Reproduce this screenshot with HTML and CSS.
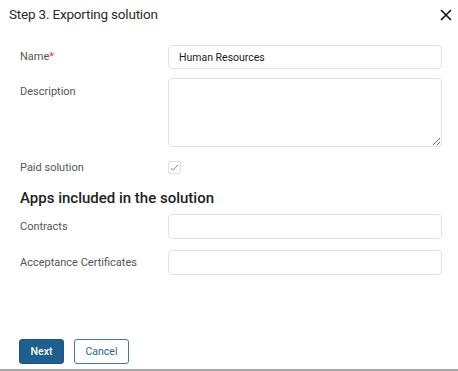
FILE: index.html
```html
<!DOCTYPE html>
<html lang="en">
<head>
<meta charset="UTF-8" />
<meta name="viewport" content="width=device-width, initial-scale=1.0"/>
<title>Step 3. Exporting solution</title>
<link rel="stylesheet" href="styles.css">
</head>
<body>
<div class="dialog">
<div class="header">
    <div class="title">Step 3. Exporting solution</div>
    <button class="close" aria-label="Close">
        <svg width="12" height="12" viewBox="0 0 12 12">
            <path d="M1 1 L11 11 M11 1 L1 11" stroke="#111" stroke-width="1.6" fill="none"/>
        </svg>
    </button>
</div>

<div class="form">
    <div class="row row-name">
        <label class="label">Name<span class="req">*</span></label>
        <input class="input" type="text" value="Human Resources">
    </div>
    <div class="row row-desc">
        <label class="label">Description</label>
        <textarea class="textarea"></textarea>
    </div>
    <div class="row row-paid">
        <label class="label">Paid solution</label>
        <span class="checkbox">
            <svg width="9" height="7" viewBox="0 0 9 7">
                <path d="M1 4 L3.3 6 L8 1" stroke="#5b6fc0" stroke-width="0.9" fill="none"/>
            </svg>
        </span>
    </div>

    <h2 class="section">Apps included in the solution</h2>

    <div class="row row-app">
        <label class="label">Contracts</label>
        <input class="input" type="text">
    </div>
    <div class="row row-app second">
        <label class="label">Acceptance Certificates</label>
        <input class="input" type="text">
    </div>
</div>

<div class="footer">
    <button class="btn btn-primary">Next</button>
    <button class="btn btn-default">Cancel</button>
</div>
<div class="bottom-line"></div>
</div>
</body>
</html>
```

FILE: styles.css
```css
body {
    margin: 0;
    font-family: Roboto, "Noto Sans", sans-serif;
    background-color: #ffffff;
    color: #333;
}
.dialog {
    width: 458px;
    height: 371px;
    display: flex;
    flex-direction: column;
}
.header {
    display: flex;
    justify-content: space-between;
    align-items: flex-start;
    height: 45px;
    padding-left: 9px;
    padding-right: 6px;
    box-sizing: border-box;
}
.title {
    font-size: 13.5px;
    line-height: 20px;
    padding-top: 4px;
    color: #2b2b2b;
    letter-spacing: -0.2px;
}
.close {
    border: none;
    background: none;
    padding: 0;
    margin-top: 9px;
    width: 12px;
    height: 12px;
    cursor: pointer;
}
.form {
    padding-left: 20px;
    padding-right: 16px;
}
.row {
    display: grid;
    grid-template-columns: 148px 274px;
    align-items: start;
}
.label {
    font-size: 11px;
    line-height: 24px;
    color: #555;
}
.req {
    color: #e53935;
}
.input {
    height: 24px;
    box-sizing: border-box;
    border: 1px solid #e2e2e2;
    border-radius: 4px;
    padding: 0 10px;
    font-family: inherit;
    font-size: 10.5px;
    color: #222;
    outline: none;
}
.row-desc {
    margin-top: 9px;
}
.row-desc .label {
    padding-top: 2px;
}
.textarea {
    height: 69px;
    box-sizing: border-box;
    border: 1px solid #e2e2e2;
    border-radius: 4px;
    font-family: inherit;
    font-size: 11px;
    outline: none;
}
.row-paid {
    margin-top: 14px;
    align-items: center;
}
.row-paid .label {
    line-height: 13px;
}
.checkbox {
    width: 13px;
    height: 13px;
    box-sizing: border-box;
    border: 1px solid #e0e0e0;
    border-radius: 2px;
    display: flex;
    align-items: center;
    justify-content: center;
}
.section {
    margin: 14px 0 0 0;
    font-size: 15px;
    line-height: 20px;
    font-weight: 500;
    color: #222;
}
.row-app {
    margin-top: 6px;
}
.row-app .input {
    height: 25px;
}
.row-app .label {
    line-height: 25px;
}
.row-app.second {
    margin-top: 11px;
}
.footer {
    display: flex;
    gap: 10px;
    padding-left: 19px;
    margin-top: 64px;
}
.btn {
    height: 25px;
    box-sizing: border-box;
    border-radius: 3px;
    font-family: inherit;
    font-size: 10.5px;
    padding: 0;
    cursor: pointer;
}
.btn-primary {
    width: 45px;
    background-color: #1f5f8f;
    border: 1px solid #1a5582;
    color: #fff;
    font-weight: 500;
}
.btn-default {
    width: 55px;
    background-color: #fff;
    border: 1px solid #3f78a8;
    color: #2f5f8a;
}
.bottom-line {
    margin-top: 5px;
    height: 2px;
    background-color: #a8a8a8;
}
```
